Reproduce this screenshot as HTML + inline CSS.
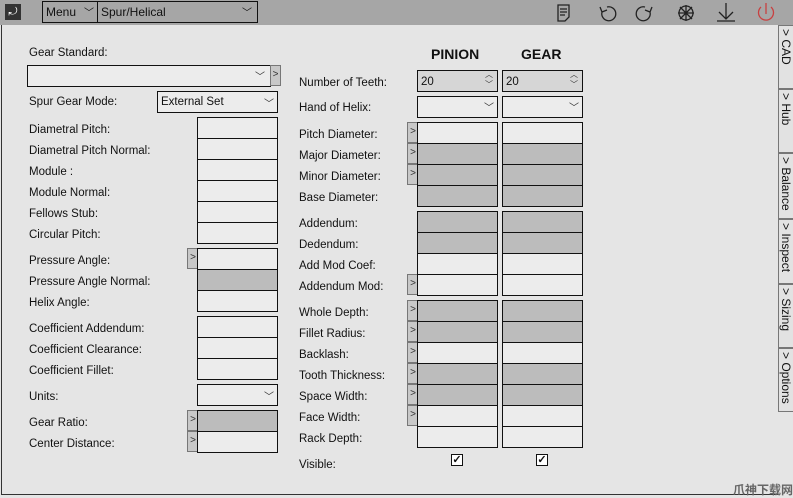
<!DOCTYPE html>
<html><head><style>
*{box-sizing:border-box;margin:0;padding:0}
body{width:793px;height:496px;overflow:hidden;background:#e5e5e5;font-family:"Liberation Sans",sans-serif;font-size:11.5px;color:#111;position:relative}
.a{position:absolute}
.tb{left:0;top:0;width:793px;height:25px;background:#a6a6a6}
.b{position:absolute;border:1px solid #111;background:#ececec;width:81px;height:22px}
.g{background:#bcbcbc}
.l{position:absolute;white-space:nowrap;margin-top:1px}
.ar{position:absolute;width:11px;height:21px;background:#c8c8c8;border:1px solid #777;border-right:none;font-size:10px;line-height:18px;text-align:center;color:#333}
.dd{position:absolute;font-size:10px;color:#333}
.tab{position:absolute;left:778px;width:15px;border:1px solid #777;border-right:none;background:#e2e2e2}
.tab span{position:absolute;left:0px;top:3px;writing-mode:vertical-rl;font-size:12px;white-space:nowrap}
.cb{position:absolute;width:12px;height:12px;border:1px solid #111;background:#fff;font-size:11px;line-height:10px;text-align:center;font-weight:bold}
</style></head><body>
<div class="a tb"></div>
<div class="a" style="left:5px;top:4px;width:16px;height:16px;background:#333;color:#fff;font-size:11px;text-align:center;line-height:16px">⤾</div>
<div class="a" style="left:42px;top:1px;width:216px;height:22px;border:1px solid #111"></div>
<div class="a" style="left:97px;top:1px;width:1px;height:22px;background:#111"></div>
<div class="l" style="left:46px;top:4px;font-size:12px">Menu</div>
<div class="l" style="left:84px;top:3px;font-size:10px">﹀</div>
<div class="l" style="left:101px;top:4px;font-size:12px">Spur/Helical</div>
<div class="l" style="left:242px;top:3px;font-size:10px">﹀</div>
<svg class="a" style="left:550px;top:1px" width="240" height="24" fill="none" stroke="#222" stroke-width="1.3">
<path d="M8 4h11v12l-4 4h-7z M10 8h7 M10 11h7 M10 14h5"/>
<path d="M57 6a7 7 0 1 1 -5 5 M50 6l2 5 5-2"/>
<path d="M95 6a7 7 0 1 0 5 5 M102 6l-2 5-5-2"/>
<circle cx="136" cy="12" r="7"/><path d="M128 12h16 M136 4v16 M130 6l12 12 M142 6l-12 12"/>
<path d="M176 2v16 M169 11l7 7 7-7 M167 20h18"/>
<path d="M211 6a7.5 7.5 0 1 0 10 0 M216 2v11" stroke="#c84040"/>
</svg>
<div class="a" style="left:1px;top:25px;width:1px;height:470px;background:#333"></div>
<div class="a" style="left:1px;top:494px;width:777px;height:1px;background:#333"></div>

<div class="l" style="left:29px;top:46px">Gear Standard:</div>
<div class="b" style="left:27px;top:65px;width:244px"></div>
<div class="dd" style="left:255px;top:68px">﹀</div>
<div class="ar" style="left:270px;top:65px;border-right:1px solid #777">&gt;</div>
<div class="l" style="left:29px;top:95px">Spur Gear Mode:</div>
<div class="b" style="left:157px;top:91px;width:121px"></div>
<div class="l" style="left:161px;top:95px">External Set</div>
<div class="dd" style="left:264px;top:95px">﹀</div>

<div class="l" style="left:29px;top:123px">Diametral Pitch:</div>
<div class="l" style="left:29px;top:144px">Diametral Pitch Normal:</div>
<div class="l" style="left:29px;top:165px">Module :</div>
<div class="l" style="left:29px;top:186px">Module Normal:</div>
<div class="l" style="left:29px;top:207px">Fellows Stub:</div>
<div class="l" style="left:29px;top:228px">Circular Pitch:</div>
<div class="b" style="left:197px;top:117px"></div><div class="b" style="left:197px;top:138px"></div><div class="b" style="left:197px;top:159px"></div><div class="b" style="left:197px;top:180px"></div><div class="b" style="left:197px;top:201px"></div><div class="b" style="left:197px;top:222px"></div>

<div class="l" style="left:29px;top:254px">Pressure Angle:</div>
<div class="l" style="left:29px;top:275px">Pressure Angle Normal:</div>
<div class="l" style="left:29px;top:296px">Helix Angle:</div>
<div class="ar" style="left:187px;top:248px">&gt;</div>
<div class="b" style="left:197px;top:248px"></div><div class="b g" style="left:197px;top:269px"></div><div class="b" style="left:197px;top:290px"></div>

<div class="l" style="left:29px;top:322px">Coefficient Addendum:</div>
<div class="l" style="left:29px;top:343px">Coefficient Clearance:</div>
<div class="l" style="left:29px;top:364px">Coefficient Fillet:</div>
<div class="b" style="left:197px;top:316px"></div><div class="b" style="left:197px;top:337px"></div><div class="b" style="left:197px;top:358px"></div>

<div class="l" style="left:29px;top:390px">Units:</div>
<div class="b" style="left:197px;top:384px"></div><div class="dd" style="left:264px;top:388px">﹀</div>

<div class="l" style="left:29px;top:416px">Gear Ratio:</div>
<div class="l" style="left:29px;top:437px">Center Distance:</div>
<div class="ar" style="left:187px;top:410px">&gt;</div><div class="ar" style="left:187px;top:431px">&gt;</div>
<div class="b g" style="left:197px;top:410px"></div><div class="b" style="left:197px;top:431px"></div>

<div class="l" style="left:431px;top:45px;font-size:14px;font-weight:bold">PINION</div>
<div class="l" style="left:521px;top:45px;font-size:14px;font-weight:bold">GEAR</div>

<div class="l" style="left:299px;top:76px">Number of Teeth:</div>
<div class="b" style="left:417px;top:70px;background:#d6d6d6"></div><div class="l" style="left:421px;top:75px">20</div>
<div class="dd" style="left:485px;top:70px;font-size:8px;line-height:10px">︿<br>﹀</div>
<div class="b" style="left:502px;top:70px;background:#d6d6d6"></div><div class="l" style="left:506px;top:75px">20</div>
<div class="dd" style="left:570px;top:70px;font-size:8px;line-height:10px">︿<br>﹀</div>
<div class="l" style="left:299px;top:101px">Hand of Helix:</div>
<div class="b" style="left:417px;top:96px"></div><div class="dd" style="left:484px;top:99px">﹀</div>
<div class="b" style="left:502px;top:96px"></div><div class="dd" style="left:569px;top:99px">﹀</div>

<div class="l" style="left:299px;top:128px">Pitch Diameter:</div>
<div class="l" style="left:299px;top:149px">Major Diameter:</div>
<div class="l" style="left:299px;top:170px">Minor Diameter:</div>
<div class="l" style="left:299px;top:191px">Base Diameter:</div>
<div class="ar" style="left:407px;top:122px">&gt;</div><div class="ar" style="left:407px;top:143px">&gt;</div><div class="ar" style="left:407px;top:164px">&gt;</div>
<div class="b" style="left:417px;top:122px"></div><div class="b g" style="left:417px;top:143px"></div><div class="b g" style="left:417px;top:164px"></div><div class="b g" style="left:417px;top:185px"></div>
<div class="b" style="left:502px;top:122px"></div><div class="b g" style="left:502px;top:143px"></div><div class="b g" style="left:502px;top:164px"></div><div class="b g" style="left:502px;top:185px"></div>

<div class="l" style="left:299px;top:217px">Addendum:</div>
<div class="l" style="left:299px;top:238px">Dedendum:</div>
<div class="l" style="left:299px;top:259px">Add Mod Coef:</div>
<div class="l" style="left:299px;top:280px">Addendum Mod:</div>
<div class="ar" style="left:407px;top:274px">&gt;</div>
<div class="b g" style="left:417px;top:211px"></div><div class="b g" style="left:417px;top:232px"></div><div class="b" style="left:417px;top:253px"></div><div class="b" style="left:417px;top:274px"></div>
<div class="b g" style="left:502px;top:211px"></div><div class="b g" style="left:502px;top:232px"></div><div class="b" style="left:502px;top:253px"></div><div class="b" style="left:502px;top:274px"></div>

<div class="l" style="left:299px;top:306px">Whole Depth:</div>
<div class="l" style="left:299px;top:327px">Fillet Radius:</div>
<div class="l" style="left:299px;top:348px">Backlash:</div>
<div class="l" style="left:299px;top:369px">Tooth Thickness:</div>
<div class="l" style="left:299px;top:390px">Space Width:</div>
<div class="l" style="left:299px;top:411px">Face Width:</div>
<div class="l" style="left:299px;top:432px">Rack Depth:</div>
<div class="ar" style="left:407px;top:300px">&gt;</div><div class="ar" style="left:407px;top:321px">&gt;</div><div class="ar" style="left:407px;top:342px">&gt;</div><div class="ar" style="left:407px;top:363px">&gt;</div><div class="ar" style="left:407px;top:384px">&gt;</div><div class="ar" style="left:407px;top:405px">&gt;</div>
<div class="b g" style="left:417px;top:300px"></div><div class="b g" style="left:417px;top:321px"></div><div class="b" style="left:417px;top:342px"></div><div class="b g" style="left:417px;top:363px"></div><div class="b g" style="left:417px;top:384px"></div><div class="b" style="left:417px;top:405px"></div><div class="b" style="left:417px;top:426px"></div>
<div class="b g" style="left:502px;top:300px"></div><div class="b g" style="left:502px;top:321px"></div><div class="b" style="left:502px;top:342px"></div><div class="b g" style="left:502px;top:363px"></div><div class="b g" style="left:502px;top:384px"></div><div class="b" style="left:502px;top:405px"></div><div class="b" style="left:502px;top:426px"></div>

<div class="l" style="left:299px;top:458px">Visible:</div>
<div class="cb" style="left:451px;top:454px">✓</div>
<div class="cb" style="left:536px;top:454px">✓</div>

<div class="tab" style="top:25px;height:64px"><span>&gt; CAD</span></div>
<div class="tab" style="top:89px;height:64px"><span>&gt; Hub</span></div>
<div class="tab" style="top:153px;height:66px"><span>&gt; Balance</span></div>
<div class="tab" style="top:219px;height:65px"><span>&gt; Inspect</span></div>
<div class="tab" style="top:284px;height:64px"><span>&gt; Sizing</span></div>
<div class="tab" style="top:348px;height:64px"><span>&gt; Options</span></div>
<div class="l" style="left:733px;top:480px;font-size:12px;color:#666;font-family:'Noto Sans CJK SC',sans-serif;font-weight:bold">爪神下载网</div>
</body></html>
